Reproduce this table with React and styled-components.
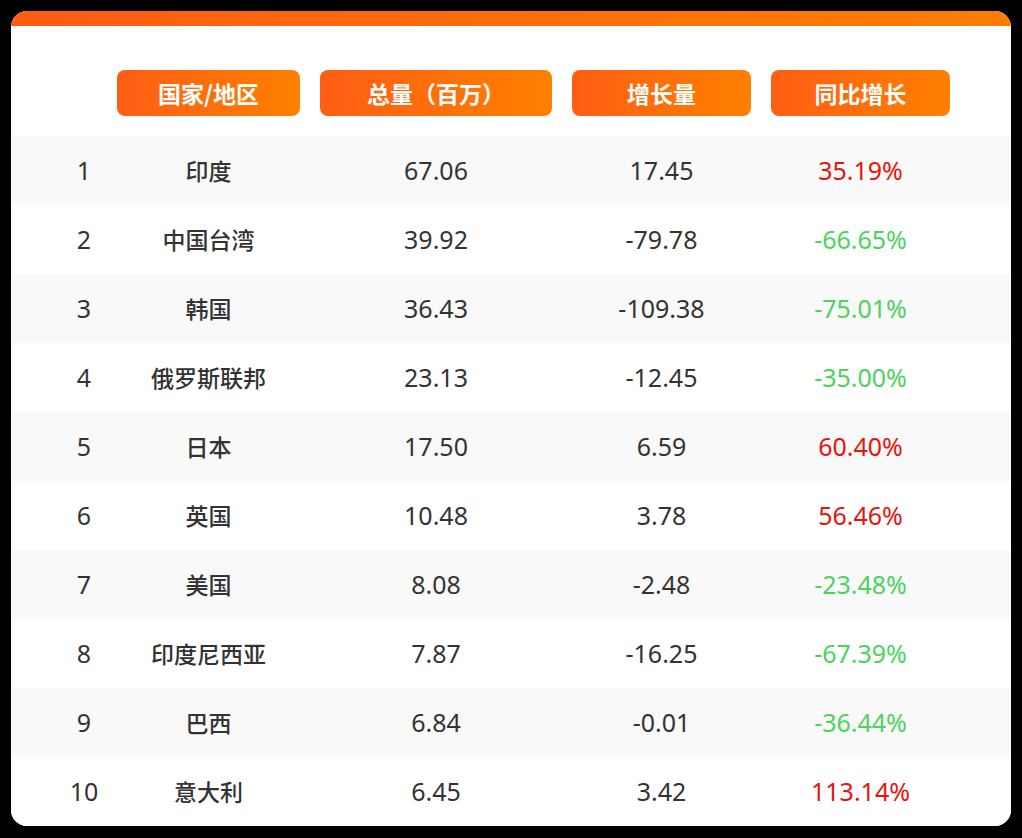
import styled, { createGlobalStyle } from 'styled-components';

const GlobalStyle = createGlobalStyle`
  html, body {
    margin: 0;
    background: #000;
  }
  body {
    padding: 11px;
    font-family: "Noto Sans", "Noto Sans CJK SC", sans-serif;
  }
`;

const Card = styled.div`
  width: 1000px;
  background: #fff;
  border-radius: 16px;
  overflow: hidden;
`;

const TopBar = styled.div`
  height: 15px;
  background: linear-gradient(90deg, #ff5c14 0%, #ff7e00 100%);
`;

const HeaderRow = styled.div`
  display: grid;
  grid-template-columns: 26px 183px 232px 179px 179px;
  column-gap: 20px;
  padding: 44px 0 20px 60px;
`;

const Pill = styled.div`
  height: 46px;
  border-radius: 8px;
  background: linear-gradient(90deg, #ff5e14 0%, #ff8000 100%);
  color: #fff;
  font-family: "Noto Sans CJK SC", sans-serif;
  font-weight: 700;
  font-size: 23px;
  line-height: 1;
  display: flex;
  align-items: center;
  justify-content: center;
`;

const Row = styled.div`
  display: grid;
  grid-template-columns: 26px 183px 232px 179px 179px;
  column-gap: 20px;
  padding-left: 60px;
  height: 69px;
  align-items: center;
  background: ${(p) => (p.$striped ? '#f9f9f9' : '#fff')};
`;

const Cell = styled.div`
  display: flex;
  justify-content: center;
  white-space: nowrap;
  font-size: 25px;
  line-height: 1;
  color: ${(p) => p.$color || '#333'};
`;

const Name = styled(Cell)`
  font-family: "Noto Sans CJK SC", sans-serif;
  font-size: 23px;
  font-weight: 500;
`;

const rows = [
  ['1', '印度', '67.06', '17.45', '35.19%'],
  ['2', '中国台湾', '39.92', '-79.78', '-66.65%'],
  ['3', '韩国', '36.43', '-109.38', '-75.01%'],
  ['4', '俄罗斯联邦', '23.13', '-12.45', '-35.00%'],
  ['5', '日本', '17.50', '6.59', '60.40%'],
  ['6', '英国', '10.48', '3.78', '56.46%'],
  ['7', '美国', '8.08', '-2.48', '-23.48%'],
  ['8', '印度尼西亚', '7.87', '-16.25', '-67.39%'],
  ['9', '巴西', '6.84', '-0.01', '-36.44%'],
  ['10', '意大利', '6.45', '3.42', '113.14%'],
];

const App = () => {
  return (
    <>
      <GlobalStyle />
      <Card>
        <TopBar />
        <HeaderRow>
          <span />
          <Pill>国家/地区</Pill>
          <Pill>总量（百万）</Pill>
          <Pill>增长量</Pill>
          <Pill>同比增长</Pill>
        </HeaderRow>
        {rows.map(([rank, name, total, growth, yoy], i) => (
          <Row key={rank} $striped={i % 2 === 0}>
            <Cell>{rank}</Cell>
            <Name>{name}</Name>
            <Cell>{total}</Cell>
            <Cell>{growth}</Cell>
            <Cell $color={yoy.startsWith('-') ? '#4cd35c' : '#e8140c'}>{yoy}</Cell>
          </Row>
        ))}
      </Card>
    </>
  );
};

export default App;
